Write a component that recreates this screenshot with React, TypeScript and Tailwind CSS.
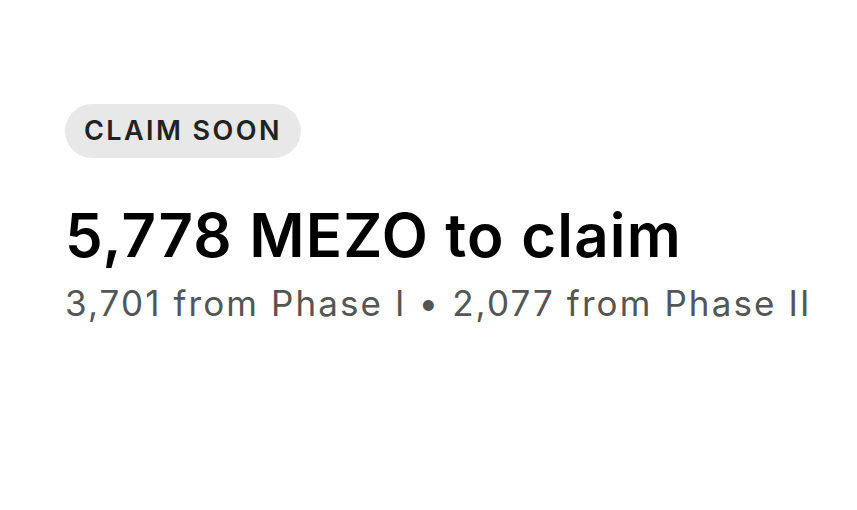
export default function App() {
  return (
    <div className="min-h-[510px] w-full bg-white px-[65px] pt-[104px] font-['Inter',sans-serif]">
      <span className="inline-flex h-[54px] items-center rounded-full bg-[#e8e8e8] px-[19px] text-[27px] font-semibold tracking-[0.09em] text-[#222]">
        CLAIM SOON
      </span>
      <h1 className="mt-[47px] text-[60px] font-semibold leading-none tracking-[0.02em] text-black">
        5,778 MEZO to claim
      </h1>
      <p className="mt-[21px] whitespace-nowrap text-[35px] leading-none tracking-[0.06em] text-[#555]">
        3,701 from Phase I • 2,077 from Phase II
      </p>
    </div>
  );
}
